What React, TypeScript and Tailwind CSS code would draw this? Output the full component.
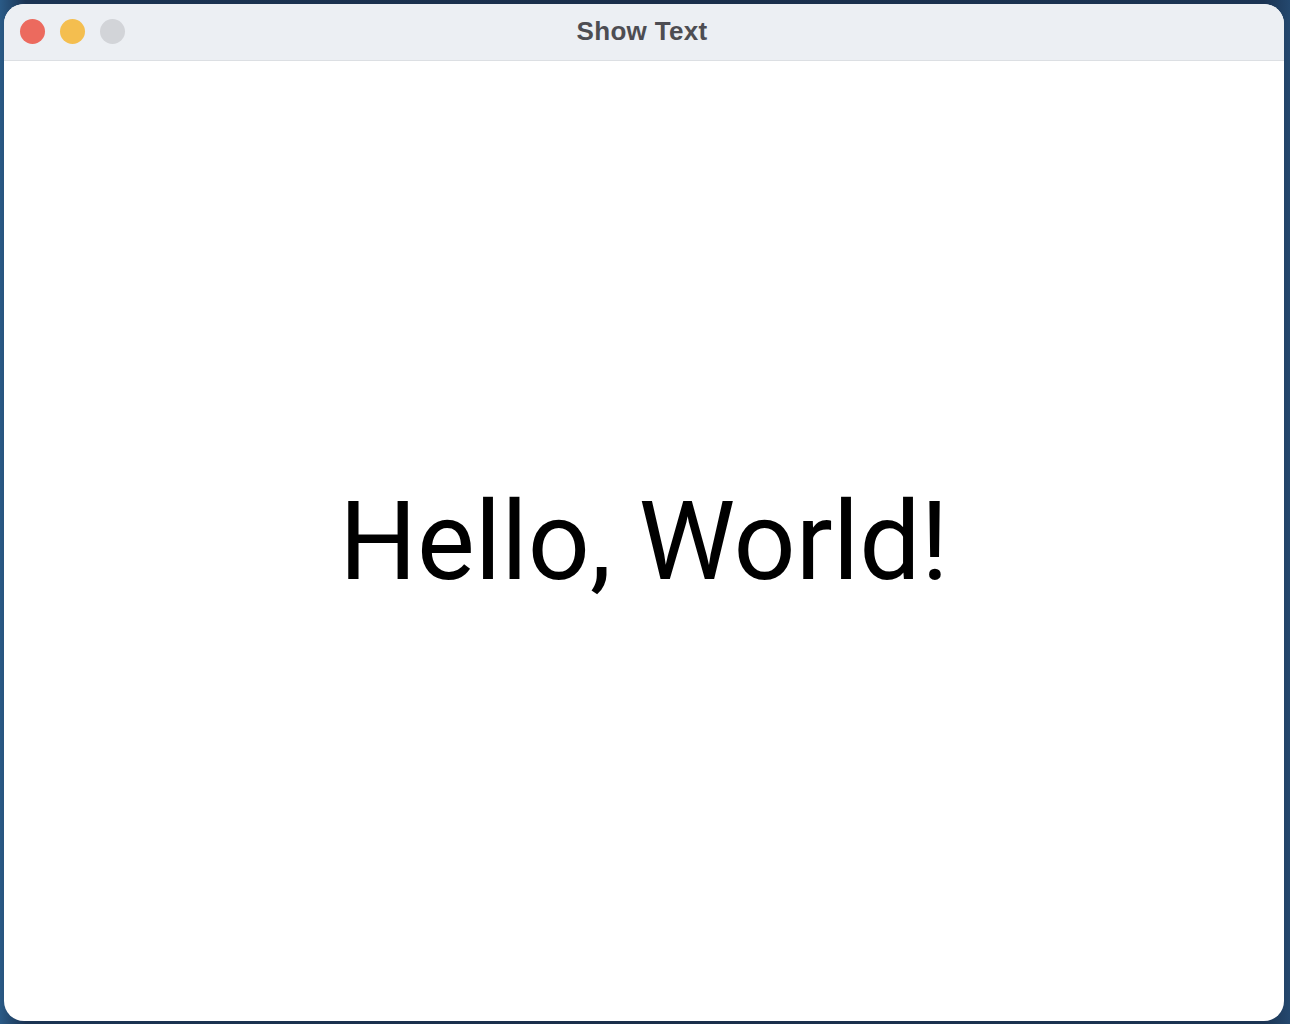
import React from "react";

export default function App() {
  return (
    <div className="w-full h-[1024px] bg-[linear-gradient(90deg,#2a5a86_0%,#1b3453_2%,#1a2e4a_50%,#1b3453_98%,#24486e_100%)] p-[4px] pb-[3px] pr-[6px] flex flex-col">
      <div className="flex-1 flex flex-col rounded-[20px] overflow-hidden bg-white">
        <div className="h-[57px] shrink-0 bg-[#eceff3] border-b border-[#dcdfe3] flex items-center relative">
          <div className="flex items-center gap-[15px] pl-[16px] pb-[1px]">
            <div className="w-[25px] h-[25px] rounded-full bg-[#ec6a5e]" />
            <div className="w-[25px] h-[25px] rounded-full bg-[#f4be4f]" />
            <div className="w-[25px] h-[25px] rounded-full bg-[#d2d4d8]" />
          </div>
          <div className="absolute inset-0 flex items-center justify-center font-['Liberation_Sans',Arial,sans-serif] font-bold text-[26px] tracking-[0.3px] text-[#4d4d52] pr-[4px] pb-[2px]">
            Show Text
          </div>
        </div>
        <div className="flex-1 flex items-center justify-center">
          <div className="font-['Roboto',sans-serif] text-[109px] text-black leading-none pt-[2px]">
            Hello, World!
          </div>
        </div>
      </div>
    </div>
  );
}
